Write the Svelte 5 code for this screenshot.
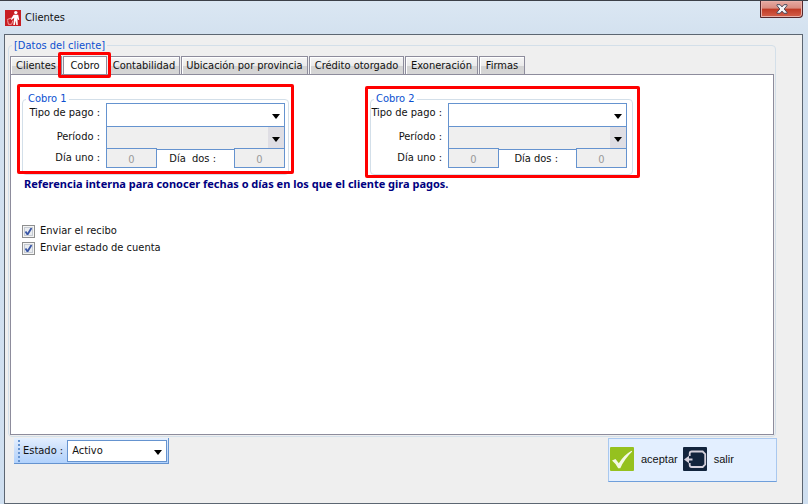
<script>
  const tabs = [
    { name: 'Clientes', width: 52 },
    { name: 'Cobro', width: 44 },
    { name: 'Contabilidad', width: 72 },
    { name: 'Ubicación por provincia', width: 127 },
    { name: 'Crédito otorgado', width: 95 },
    { name: 'Exoneración', width: 73 },
    { name: 'Firmas', width: 46 }
  ];
  let active = $state('Cobro');
  let receipt = $state(true);
  let statement = $state(true);
  let status = $state('Activo');
  const groups = [
    { id: 'c1', title: 'Cobro 1', second: 'Día  dos :', one: 0, two: 0 },
    { id: 'c2', title: 'Cobro 2', second: 'Día dos :', one: 0, two: 0 }
  ];
</script>

{#snippet arrow()}
  <svg class="arrow" width="8" height="5" viewBox="0 0 8 5" aria-hidden="true"><path d="M0 0h8L4 5z" fill="#000" /></svg>
{/snippet}

<div class="window">
  <header class="titlebar">
    <svg width="16" height="16" viewBox="0 0 16 16" aria-hidden="true">
      <rect width="16" height="16" fill="#c81e23" />
      <circle cx="10.8" cy="2.6" r="1.7" fill="#fff" />
      <path d="M8.6 4.8h4.6l1 5-1 .3-.8-2 .4 6.900h-1.5l-.5-4.500-1 4.500H8.300l.9-7.200-2.600 2.100-.7-.8z" fill="#fff" />
      <path d="M2.200 9.500 6.500 8M2.600 10.300l.8 4h3.200l1.300-3.800" fill="none" stroke="#f0a5a5" stroke-width="1" />
    </svg>
    <h1>Clientes</h1>
    <button class="close" aria-label="Cerrar">
      <svg width="12" height="10" viewBox="0 0 12 10" aria-hidden="true">
        <path d="M1 .7h3.100L6 2.900 7.900.7H11v1L8.200 5 11 8.300v1H7.900L6 7.100 4.100 9.300H1v-1L3.800 5 1 1.700z" fill="#f4f4f6" stroke="#4b4a5c" stroke-width="1" />
      </svg>
    </button>
  </header>

  <main class="client">
    <section class="outer" aria-labelledby="datos">
      <h2 id="datos">[Datos del cliente]</h2>
      <div class="tabs" role="tablist">
        {#each tabs as tab}
          <button
            role="tab"
            class="tab"
            class:on={active === tab.name}
            aria-selected={active === tab.name}
            style="width: {tab.width}px"
            onclick={() => (active = tab.name)}>{tab.name}</button>
        {/each}
      </div>
      <div class="panel">
        <div class="groups">
          {#each groups as g}
            <fieldset class="group {g.id}">
              <legend>{g.title}</legend>
              <div class="rows">
                <div class="row">
                  <label for="{g.id}-tipo">Tipo de pago :</label>
                  <div class="combo"><select id="{g.id}-tipo"><option></option></select>{@render arrow()}</div>
                </div>
                <div class="row period">
                  <label for="{g.id}-per">Período :</label>
                  <div class="combo off"><select id="{g.id}-per" disabled><option></option></select>{@render arrow()}</div>
                </div>
                <div class="row days">
                  <label for="{g.id}-uno">Día uno :</label>
                  <input id="{g.id}-uno" value={g.one} disabled />
                  <label class="mid" for="{g.id}-dos">{g.second}</label>
                  <input id="{g.id}-dos" value={g.two} disabled />
                </div>
              </div>
            </fieldset>
          {/each}
        </div>
        <p class="note">Referencia interna para conocer fechas o días en los que el cliente gira pagos.</p>
        <div class="checks">
          <label><input type="checkbox" bind:checked={receipt} />Enviar el recibo</label>
          <label><input type="checkbox" bind:checked={statement} />Enviar estado de cuenta</label>
        </div>
      </div>
    </section>

    <footer class="bottom">
      <div class="status">
        <span class="grip"></span>
        <label for="estado">Estado :</label>
        <div class="combo">
          <select id="estado" bind:value={status}><option>Activo</option><option>Inactivo</option></select>
          {@render arrow()}
        </div>
      </div>
      <div class="actions">
        <button>
          <svg width="24" height="24" viewBox="0 0 24 24" aria-hidden="true">
            <rect width="24" height="24" rx="1" fill="#95c11f" />
            <path d="M2 13.500 5.500 12l3.300 4.200Q14 8 21.500 3.800l.7.8Q14.500 12 10.300 21.200H8.200Q5.500 16.300 2 13.500z" fill="#f4f9e6" />
          </svg>
          aceptar
        </button>
        <button>
          <svg width="24" height="24" viewBox="0 0 24 24" aria-hidden="true">
            <rect width="24" height="24" rx="1" fill="#12243c" />
            <path d="M6.700 9V6.500q0-2 2-2h11l2.500 2.500v10.500l-2.500 2.500h-11q-2 0-2-2V16" fill="none" stroke="#d5d1dc" stroke-width="1.800" />
            <path d="M9.500 12.500H4" fill="none" stroke="#d5d1dc" stroke-width="2" />
            <path d="M1 12.500 6 8.800v7.400z" fill="#d5d1dc" />
          </svg>
          salir
        </button>
      </div>
    </footer>
  </main>
</div>

<style>
  :global(body) { margin: 0; }
  .window, .window * { box-sizing: border-box; }
  .window {
    min-height: 100vh;
    display: flex;
    flex-direction: column;
    padding: 0 5px 0 4px;
    border-top: 1px solid #3c4048;
    background: linear-gradient(#dbe7f3, #d3e1ef 34px, #cfdff0);
    font: 11px/14px "DejaVu Sans Condensed", "DejaVu Sans", sans-serif;
    color: #111;
  }
  button, select, input { font: inherit; color: inherit; margin: 0; border-radius: 0; }
  .titlebar { height: 33px; flex: none; display: flex; align-items: center; gap: 4px; padding-left: 1px; }
  h1 { font: inherit; margin: 0; flex: 1; }
  .close {
    align-self: flex-start;
    width: 43px;
    height: 17px;
    padding: 0;
    display: flex;
    align-items: center;
    justify-content: center;
    border: 1px solid #54282d;
    border-top: 0;
    border-radius: 0 0 4px 1px;
    box-shadow: inset 0 0 0 1px #e9b0a8;
    background: linear-gradient(#e6aaa2, #d98c80 45%, #bf3a25 50%, #d4604a);
  }
  .client {
    flex: 1;
    display: flex;
    flex-direction: column;
    border: 1px solid #5c6672;
    background: #efefef;
    padding: 10px 26px 21px 3px;
  }
  .outer {
    flex: 1;
    display: flex;
    flex-direction: column;
    padding: 0 1px 1px;
    border: 1px solid #d3dfe9;
    border-radius: 4px;
  }
  h2 { align-self: flex-start; margin: -7px 0 3px 2px; padding: 0 2px; background: #efefef; color: #0b4fd0; font: inherit; }
  .tabs { display: flex; gap: 1px; }
  .tab {
    height: 18px;
    padding: 1px 0 0;
    white-space: nowrap;
    border: 1px solid #8d8c9c;
    border-bottom: 0;
    box-shadow: inset 1px 1px #fff;
    background: linear-gradient(#f5f5f5, #ebebeb 50%, #d3d3d3 55%, #d6d6d6);
  }
  .tab.on { position: relative; background: #fff; z-index: 1; }
  .tab.on::after { content: ""; position: absolute; inset: -5px -5px -4px -6px; border: 3px solid #f00; border-radius: 2px; }
  .panel { flex: 1; border: 1px solid #8d8c9c; background: #fff; padding: 17px 11px; }
  .groups { display: flex; gap: 81px; }
  fieldset { margin: 0; min-width: 0; border: 1px solid #d3dfe9; border-radius: 4px; }
  legend { padding: 0 2px; color: #0b4fd0; }
  .group { position: relative; padding: 0 3px 7px 0; height: 83px; }
  .group > legend { margin-left: 3px; }
  .c1 { width: 267px; }
  .c2 { width: 263px; padding-right: 5px; }
  .group::after { content: ""; position: absolute; border: 3px solid #f00; border-radius: 2px; pointer-events: none; }
  .c1::after { inset: -22px -6px 0 -6px; }
  .c2::after { inset: -20px -8px -4px -6px; }
  .rows { margin-top: -3px; }
  .row { display: flex; justify-content: flex-end; }
  .row > label { flex: 1; min-width: 0; text-align: right; padding: 3px 6px 0 0; white-space: nowrap; }
  .days { position: relative; margin-top: -2px; }
  .row .mid { flex: none; width: 77px; padding: 4px 18px 0 0; white-space: pre; }
  .row input {
    width: 51px;
    height: 20px;
    padding: 2px 0 0;
    text-align: center;
    border: 1px solid #6593cf;
    background: #efefef;
    color: #9a9a9a;
  }
  .combo { position: relative; flex: none; width: 179px; height: 24px; }
  .combo.off { margin-top: -1px; }
  select {
    display: block;
    width: 100%;
    height: 100%;
    appearance: none;
    padding: 0 18px 0 4px;
    border: 1px solid #6593cf;
    background: #fff;
    opacity: 1;
  }
  .off select { background: linear-gradient(#dfdee4, #dfdee4) right / 16px 100% no-repeat #efefef; }
  .arrow { position: absolute; right: 5px; top: calc(50% - 1px); pointer-events: none; }
  .note { margin: 2px 0 0 2px; font-family: "Noto Sans", sans-serif; font-weight: bold; color: #000080; white-space: nowrap; }
  .checks { display: flex; flex-direction: column; gap: 3px; margin-top: 33px; }
  .checks label { display: flex; align-items: center; gap: 5px; width: max-content; }
  .checks input {
    appearance: none;
    width: 13px;
    height: 13px;
    border: 1px solid #8e8f8f;
    box-shadow: inset 0 0 0 1px #f4f4f4, inset 0 0 0 2px #c6cbd2;
    background: #e9ecf0;
  }
  .checks input:checked {
    background: #e9ecf0 url("data:image/svg+xml,%3Csvg xmlns='http://www.w3.org/2000/svg' viewBox='0 0 11 11'%3E%3Cpath d='M2.500 5.500l2 3 4-6.500' fill='none' stroke='%233a56a5' stroke-width='1.800'/%3E%3C/svg%3E") center / 11px no-repeat;
  }
  .bottom { display: flex; justify-content: space-between; align-items: flex-start; padding: 1px 0 0 6px; margin-right: -1px; }
  .status {
    display: flex;
    align-items: center;
    height: 26px;
    padding-right: 1px;
    border-right: 1px solid #6593cf;
    border-bottom: 1px solid #6593cf;
    background: linear-gradient(#e3efff, #c6dcfa 55%, #b1d2fd);
  }
  .grip { width: 2px; height: 22px; margin: 0 3px 0 4px; background: repeating-linear-gradient(#6593cf 0 2px, transparent 2px 4px); }
  .status .combo { width: 100px; height: 22px; margin-left: 4px; }
  .actions {
    display: flex;
    align-items: center;
    gap: 5px;
    width: 169px;
    height: 44px;
    padding: 0 1px 2px;
    border: 1px solid #a9c8ef;
    border-bottom-color: #6f9fdb;
    background: #e3efff;
  }
  .actions button {
    display: flex;
    align-items: center;
    gap: 7px;
    padding: 0;
    border: 0;
    background: none;
    font-family: "Liberation Sans", Arial, sans-serif;
  }
</style>
